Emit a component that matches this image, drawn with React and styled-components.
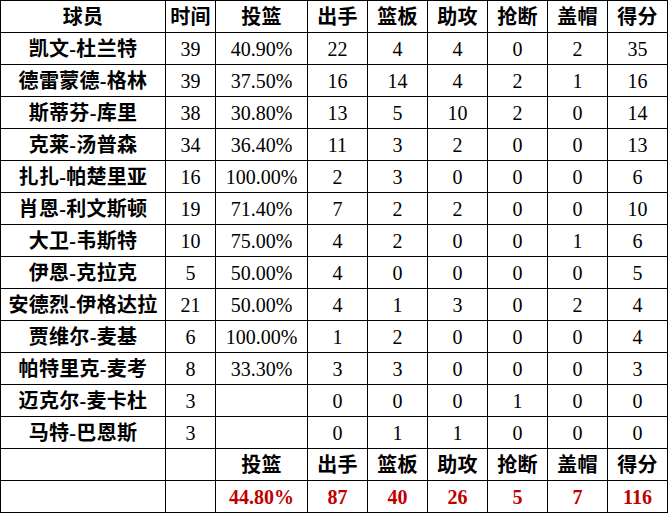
import React from "react";
import styled, { createGlobalStyle } from "styled-components";

const Global = createGlobalStyle`
  html, body { margin: 0; padding: 0; background: #fff; }
  body { font-family: "Liberation Serif", "Noto Sans CJK SC", serif; }
`;

const Table = styled.table`
  border-collapse: collapse;
  table-layout: fixed;
  width: 668px;
  font-family: "Liberation Serif", "Noto Sans CJK SC", serif;
  font-size: 20px;
  color: #000;
`;

const Row = styled.tr`
  height: 32px;
`;

const Cell = styled.td`
  border: 1px solid #000;
  padding: 0;
  text-align: center;
  vertical-align: middle;
  line-height: 20px;
  white-space: nowrap;
  overflow: hidden;
  font-weight: ${(p) => (p.$bold ? 700 : 400)};
  color: ${(p) => (p.$red ? "#c00000" : "#000")};
`;

const LabelCell = styled(Cell).attrs({ $bold: true })`
  font-family: "Liberation Serif", "Noto Sans CJK SC", serif;
  letter-spacing: 0.3px;
`;

const widths = [165, 50, 92, 60, 60, 60, 60, 60, 60];

const headers = ["球员", "时间", "投篮", "出手", "篮板", "助攻", "抢断", "盖帽", "得分"];

const players = [
  ["凯文-杜兰特", 39, "40.90%", 22, 4, 4, 0, 2, 35],
  ["德雷蒙德-格林", 39, "37.50%", 16, 14, 4, 2, 1, 16],
  ["斯蒂芬-库里", 38, "30.80%", 13, 5, 10, 2, 0, 14],
  ["克莱-汤普森", 34, "36.40%", 11, 3, 2, 0, 0, 13],
  ["扎扎-帕楚里亚", 16, "100.00%", 2, 3, 0, 0, 0, 6],
  ["肖恩-利文斯顿", 19, "71.40%", 7, 2, 2, 0, 0, 10],
  ["大卫-韦斯特", 10, "75.00%", 4, 2, 0, 0, 1, 6],
  ["伊恩-克拉克", 5, "50.00%", 4, 0, 0, 0, 0, 5],
  ["安德烈-伊格达拉", 21, "50.00%", 4, 1, 3, 0, 2, 4],
  ["贾维尔-麦基", 6, "100.00%", 1, 2, 0, 0, 0, 4],
  ["帕特里克-麦考", 8, "33.30%", 3, 3, 0, 0, 0, 3],
  ["迈克尔-麦卡杜", 3, "", 0, 0, 0, 1, 0, 0],
  ["马特-巴恩斯", 3, "", 0, 1, 1, 0, 0, 0],
];

const totals = ["44.80%", 87, 40, 26, 5, 7, 116];

export default function App() {
  return (
    <>
      <Global />
      <Table>
        <colgroup>
          {widths.map((w, i) => (
            <col key={i} style={{ width: w }} />
          ))}
        </colgroup>
        <tbody>
          <Row>
            {headers.map((h) => (
              <LabelCell key={h}>{h}</LabelCell>
            ))}
          </Row>
          {players.map((p) => (
            <Row key={p[0]}>
              <LabelCell>{p[0]}</LabelCell>
              {p.slice(1).map((v, i) => (
                <Cell key={i}>{v}</Cell>
              ))}
            </Row>
          ))}
          <Row>
            <Cell />
            <Cell />
            {headers.slice(2).map((h) => (
              <LabelCell key={h}>{h}</LabelCell>
            ))}
          </Row>
          <Row>
            <Cell />
            <Cell />
            {totals.map((v, i) => (
              <Cell key={i} $bold $red>
                {v}
              </Cell>
            ))}
          </Row>
        </tbody>
      </Table>
    </>
  );
}
